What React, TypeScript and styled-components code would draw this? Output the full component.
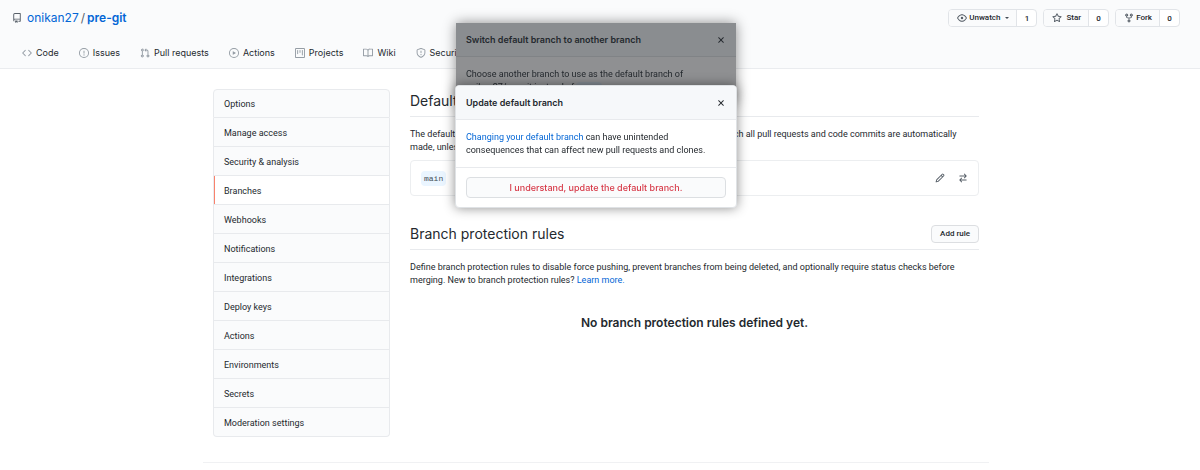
import React from "react";
import styled, { createGlobalStyle } from "styled-components";

const GlobalStyle = createGlobalStyle`
  *, *::before, *::after { box-sizing: border-box; }
  body {
    margin: 0;
    background: #fff;
    color: #24292e;
    font-family: Roboto, "Liberation Sans", sans-serif;
    font-size: 9px;
    line-height: 13px;
  }
  h1, h2, h3, p, ul { margin: 0; padding: 0; }
  h1, h2, h3 { font-family: Inter, "Liberation Sans", sans-serif; }
  ul { list-style: none; }
  button { font: inherit; color: inherit; cursor: pointer; }
  a { color: #0366d6; text-decoration: none; }
`;

const paths = {
  repo: "M2 2.5A2.5 2.5 0 014.5 0h8.75a.75.75 0 01.75.75v12.5a.75.75 0 01-.75.75h-2.5a.75.75 0 110-1.5h1.75v-2h-8a1 1 0 00-.714 1.7.75.75 0 01-1.072 1.05A2.495 2.495 0 012 11.5v-9zm10.5-1V9h-8c-.356 0-.694.074-1 .208V2.5a1 1 0 011-1h8zM5 12.25v3.25a.25.25 0 00.4.2l1.45-1.087a.25.25 0 01.3 0L8.6 15.7a.25.25 0 00.4-.2v-3.25a.25.25 0 00-.25-.25h-3.5a.25.25 0 00-.25.25z",
  code: "M4.72 3.22a.75.75 0 011.06 1.06L2.06 8l3.72 3.72a.75.75 0 11-1.06 1.06L.47 8.53a.75.75 0 010-1.06l4.25-4.25zm6.56 0a.75.75 0 10-1.06 1.06L13.94 8l-3.72 3.72a.75.75 0 101.06 1.06l4.25-4.25a.75.75 0 000-1.06l-4.25-4.25z",
  issue: "M8 1.5a6.5 6.5 0 100 13 6.5 6.5 0 000-13zM0 8a8 8 0 1116 0A8 8 0 010 8zm9 3a1 1 0 11-2 0 1 1 0 012 0zm-.25-6.25a.75.75 0 00-1.5 0v3.5a.75.75 0 001.5 0v-3.5z",
  pull: "M7.177 3.073L9.573.677A.25.25 0 0110 .854v4.792a.25.25 0 01-.427.177L7.177 3.427a.25.25 0 010-.354zM3.75 2.5a.75.75 0 100 1.5.75.75 0 000-1.5zm-2.25.75a2.25 2.25 0 113 2.122v5.256a2.251 2.251 0 11-1.5 0V5.372A2.25 2.25 0 011.5 3.25zM11 2.5h-1V4h1a1 1 0 011 1v5.628a2.251 2.251 0 101.5 0V5A2.5 2.5 0 0011 2.5zm1 10.25a.75.75 0 111.5 0 .75.75 0 01-1.5 0zM3.75 12a.75.75 0 100 1.5.75.75 0 000-1.5z",
  play: "M1.5 8a6.5 6.5 0 1113 0 6.5 6.5 0 01-13 0zM8 0a8 8 0 100 16A8 8 0 008 0zM6.379 5.227A.25.25 0 006 5.442v5.117a.25.25 0 00.379.214l4.264-2.559a.25.25 0 000-.428L6.379 5.227z",
  project: "M1.75 0A1.75 1.75 0 000 1.75v12.5C0 15.216.784 16 1.75 16h12.5A1.75 1.75 0 0016 14.25V1.75A1.75 1.75 0 0014.25 0H1.75zM1.5 1.75a.25.25 0 01.25-.25h12.5a.25.25 0 01.25.25v12.5a.25.25 0 01-.25.25H1.75a.25.25 0 01-.25-.25V1.75zM11.75 3a.75.75 0 00-.75.75v7.5a.75.75 0 001.5 0v-7.5a.75.75 0 00-.75-.75zm-8.25.75a.75.75 0 011.5 0v5.5a.75.75 0 01-1.5 0v-5.5zM8 3a.75.75 0 00-.75.75v3.5a.75.75 0 001.5 0v-3.5A.75.75 0 008 3z",
  book: "M0 1.75A.75.75 0 01.75 1h4.253c1.227 0 2.317.59 3 1.501A3.744 3.744 0 0111.006 1h4.245a.75.75 0 01.75.75v10.5a.75.75 0 01-.75.75h-4.507a2.25 2.25 0 00-1.591.659l-.622.621a.75.75 0 01-1.06 0l-.622-.621A2.25 2.25 0 005.258 13H.75a.75.75 0 01-.75-.75V1.75zm8.755 3a2.25 2.25 0 012.25-2.25H14.5v9h-3.757c-.71 0-1.4.201-1.992.572l.004-7.322zm-1.504 7.324l.004-5.073-.002-2.253A2.25 2.25 0 005.003 2.5H1.5v9h3.757a3.75 3.75 0 011.994.574z",
  shield: "M7.467.133a1.75 1.75 0 011.066 0l5.25 1.68A1.75 1.75 0 0115 3.48V7c0 1.566-.32 3.182-1.303 4.682-.983 1.498-2.585 2.813-5.032 3.855a1.7 1.7 0 01-1.33 0c-2.447-1.042-4.049-2.357-5.032-3.855C1.32 10.182 1 8.566 1 7V3.48a1.75 1.75 0 011.217-1.667l5.25-1.68zm.61 1.429a.25.25 0 00-.153 0l-5.25 1.68a.25.25 0 00-.174.238V7c0 1.358.275 2.666 1.057 3.86.784 1.194 2.121 2.34 4.366 3.297a.2.2 0 00.154 0c2.245-.956 3.582-2.104 4.366-3.298C13.225 9.666 13.5 8.36 13.5 7V3.48a.25.25 0 00-.174-.237l-5.25-1.68zM9 10.5a1 1 0 11-2 0 1 1 0 012 0zm-.25-5.75a.75.75 0 10-1.5 0v3a.75.75 0 001.5 0v-3z",
  eye: "M1.679 7.932c.412-.621 1.242-1.75 2.366-2.717C5.175 4.242 6.527 3.5 8 3.5c1.473 0 2.824.742 3.955 1.715 1.124.967 1.954 2.096 2.366 2.717a.119.119 0 010 .136c-.412.621-1.242 1.75-2.366 2.717C10.825 11.758 9.473 12.5 8 12.5c-1.473 0-2.824-.742-3.955-1.715C2.92 9.818 2.09 8.69 1.679 8.068a.119.119 0 010-.136zM8 2c-1.981 0-3.67.992-4.933 2.078C1.797 5.169.88 6.423.43 7.1a1.619 1.619 0 000 1.798c.45.678 1.367 1.932 2.637 3.024C4.329 13.008 6.019 14 8 14c1.981 0 3.67-.992 4.933-2.078 1.27-1.091 2.187-2.345 2.637-3.023a1.619 1.619 0 000-1.798c-.45-.678-1.367-1.932-2.637-3.023C11.671 2.992 9.981 2 8 2zm0 8a2 2 0 100-4 2 2 0 000 4z",
  star: "M8 .25a.75.75 0 01.673.418l1.882 3.815 4.21.612a.75.75 0 01.416 1.279l-3.046 2.97.719 4.192a.75.75 0 01-1.088.791L8 12.347l-3.766 1.98a.75.75 0 01-1.088-.79l.72-4.194L.818 6.374a.75.75 0 01.416-1.28l4.21-.611L7.327.668A.75.75 0 018 .25zm0 2.445L6.615 5.5a.75.75 0 01-.564.41l-3.097.45 2.24 2.184a.75.75 0 01.216.664l-.528 3.084 2.769-1.456a.75.75 0 01.698 0l2.77 1.456-.53-3.084a.75.75 0 01.216-.664l2.24-2.183-3.096-.45a.75.75 0 01-.564-.41L8 2.694v.001z",
  fork: "M5 3.25a.75.75 0 11-1.5 0 .75.75 0 011.5 0zm0 2.122a2.25 2.25 0 10-1.5 0v.878A2.25 2.25 0 005.75 8.5h1.5v2.128a2.251 2.251 0 101.5 0V8.5h1.5a2.25 2.25 0 002.25-2.25v-.878a2.25 2.25 0 10-1.5 0v.878a.75.75 0 01-.75.75h-4.5A.75.75 0 015 6.25v-.878zm3.75 7.378a.75.75 0 11-1.5 0 .75.75 0 011.5 0zm3-8.75a.75.75 0 100-1.5.75.75 0 000 1.5z",
  pencil: "M11.013 1.427a1.75 1.75 0 012.474 0l1.086 1.086a1.75 1.75 0 010 2.474l-8.61 8.61c-.21.21-.47.364-.756.445l-3.251.93a.75.75 0 01-.927-.928l.929-3.25a1.75 1.75 0 01.445-.758l8.61-8.61zm1.414 1.06a.25.25 0 00-.354 0L10.811 3.75l1.439 1.44 1.263-1.263a.25.25 0 000-.354l-1.086-1.086zM11.189 6.25L9.75 4.81l-6.286 6.287a.25.25 0 00-.064.108l-.558 1.953 1.953-.558a.249.249 0 00.108-.064l6.286-6.286z",
  swap: "M5.22 14.78a.75.75 0 001.06-1.06L4.56 12h8.69a.75.75 0 000-1.5H4.56l1.72-1.72a.75.75 0 00-1.06-1.06l-3 3a.75.75 0 000 1.06l3 3zm5.56-6.5a.75.75 0 11-1.06-1.06l1.72-1.72H2.75a.75.75 0 010-1.5h8.69L9.72 2.28a.75.75 0 011.06-1.06l3 3a.75.75 0 010 1.06l-3 3z",
  close: "M3.72 3.72a.75.75 0 011.06 0L8 6.94l3.22-3.22a.75.75 0 111.06 1.06L9.06 8l3.22 3.22a.75.75 0 11-1.06 1.06L8 9.06l-3.22 3.22a.75.75 0 01-1.06-1.06L6.94 8 3.72 4.78a.75.75 0 010-1.06z",
};

type IconName = keyof typeof paths;

const Svg = styled.svg<{ $tone: string }>`
  flex: none;
  display: block;
  fill: ${(p) => p.$tone};
`;

function Icon({ name, size = 10, tone = "#586069" }: { name: IconName; size?: number; tone?: string }) {
  return (
    <Svg $tone={tone} width={size} height={size} viewBox="0 0 16 16" aria-hidden="true">
      <path fillRule="evenodd" d={paths[name]} />
    </Svg>
  );
}

const gutter = "8px";

const Header = styled.header`
  display: flex;
  flex-direction: column;
  justify-content: space-between;
  height: 69px;
  padding: 9px calc(12px + ${gutter}) 0 12px;
  background: #fafbfc;
  border-bottom: 1px solid #eaecef;
`;

const TitleRow = styled.div`
  display: flex;
  justify-content: space-between;
  align-items: center;
  height: 18px;
`;

const RepoTitle = styled.h1`
  display: flex;
  align-items: center;
  gap: 2px;
  font-size: 12px;
  line-height: 18px;
  font-weight: 400;
  svg { margin-right: 3px; }
`;

const Slash = styled.span`
  color: #586069;
`;

const RepoLink = styled.a`
  font-weight: 600;
`;

const Actions = styled.ul`
  display: flex;
  gap: 6px;
`;

const ActionGroup = styled.li`
  display: flex;
  height: 18px;
  border: 1px solid #e1e4e8;
  border-radius: 4px;
  background: #fff;
  overflow: hidden;
  font-size: 8px;
  line-height: 16px;
  font-weight: 500;
`;

const ActionButton = styled.button<{ $gap: number }>`
  display: flex;
  align-items: center;
  gap: ${(p) => p.$gap}px;
  padding: 0 7px 0 8px;
  border: 0;
  border-right: 1px solid #e1e4e8;
  background: #fafbfc;
`;

const ActionCount = styled.a`
  min-width: 19px;
  padding-top: 1px;
  color: #24292e;
  text-align: center;
`;

const Caret = styled.span`
  margin-left: 3px;
  border: 2px solid transparent;
  border-top-color: #444d56;
  border-bottom: 0;
`;

const Tabs = styled.nav`
  display: flex;
  gap: 20px;
  height: 31px;
  padding-left: 10px;
  font-family: Inter, "Liberation Sans", sans-serif;
`;

const Tab = styled.a`
  display: flex;
  align-items: center;
  gap: 4px;
  color: #24292e;
`;

const Page = styled.div`
  padding-right: ${gutter};
`;

const Container = styled.div`
  max-width: 786px;
  margin: 0 auto;
`;

const Columns = styled.main`
  display: flex;
  gap: 20px;
  padding: 20px 10px 25px;
  border-bottom: 1px solid #f0f1f3;
`;

const Menu = styled.nav`
  flex: 0 0 177px;
  display: flex;
  flex-direction: column;
`;

const MenuItem = styled.a<{ $active?: boolean }>`
  display: block;
  height: 29px;
  padding: 9px 10px 6px;
  border: 1px solid #e8eaed;
  border-top: 0;
  background: ${(p) => (p.$active ? "#fff" : "#fafbfc")};
  box-shadow: ${(p) => (p.$active ? "inset 1px 0 #f9826c" : "none")};
  color: #24292e;
  &:first-child {
    padding-top: 8px;
    border-top: 1px solid #e8eaed;
    border-radius: 4px 4px 0 0;
  }
  &:last-child { border-radius: 0 0 4px 4px; }
`;

const Content = styled.div`
  flex: 1;
  min-width: 0;
`;

const SectionHead = styled.div`
  display: flex;
  justify-content: space-between;
  align-items: center;
  height: 28px;
  padding-bottom: 4px;
  border-bottom: 1px solid #e8eaed;
`;

const SectionTitle = styled.h2`
  font-size: 14px;
  line-height: 22px;
  font-weight: 400;
`;

const Section = styled.section`
  & + & { margin-top: 26px; }
`;

const Paragraph = styled.p`
  padding-top: 11px;
`;

const BranchBox = styled.div`
  display: flex;
  align-items: center;
  gap: 13px;
  height: 36px;
  margin-top: 6px;
  padding: 0 10px;
  border: 1px solid #eceef0;
  border-radius: 4px;
`;

const BranchName = styled.code`
  padding: 1px 3px;
  border-radius: 4px;
  background: #eaf5ff;
  color: #444d56;
  font-family: "Liberation Mono", monospace;
  font-size: 8px;
`;

const Spacer = styled.span`
  flex: 1;
`;

const IconButton = styled.button`
  display: flex;
  padding: 0;
  border: 0;
  background: none;
`;

const SmallButton = styled.button`
  height: 18px;
  padding: 0 8px;
  border: 1px solid #dcdee1;
  border-radius: 4px;
  background: #fafbfc;
  font-size: 8px;
  line-height: 16px;
  font-weight: 500;
`;

const Blank = styled.h3`
  padding: 27px 0;
  font-size: 12px;
  line-height: 18px;
  font-weight: 600;
  text-align: center;
`;

const Layer = styled.div<{ $top: number }>`
  position: fixed;
  inset: 0 ${gutter} auto 0;
  display: flex;
  justify-content: center;
  padding-top: ${(p) => p.$top}px;
`;

const Dialog = styled.section<{ $dimmed?: boolean }>`
  width: ${(p) => (p.$dimmed ? 280 : 282)}px;
  border: ${(p) => (p.$dimmed ? "0" : "1px solid #dfe2e5")};
  border-radius: ${(p) => (p.$dimmed ? 0 : 4)}px;
  background: ${(p) => (p.$dimmed ? "#8f9092" : "#fff")};
  box-shadow: 0 0 12px rgba(0, 0, 0, 0.45);
  overflow: hidden;
  --head: ${(p) => (p.$dimmed ? "#8a8d90" : "#f6f8fa")};
  --line: ${(p) => (p.$dimmed ? "#808386" : "#e8eaed")};
`;

const DialogHead = styled.header`
  display: flex;
  justify-content: space-between;
  align-items: center;
  height: 34px;
  padding: 0 10px;
  border-bottom: 1px solid var(--line);
  background: var(--head);
`;

const DialogTitle = styled.h3`
  font-size: 9px;
  line-height: 13px;
  font-weight: 600;
`;

const DialogBody = styled.p`
  padding: 11px 10px 10px;
`;

const DialogFoot = styled.div`
  padding: 9px 10px;
  border-top: 1px solid var(--line);
`;

const DangerButton = styled.button`
  display: block;
  width: 100%;
  height: 21px;
  border: 1px solid #dcdfe2;
  border-radius: 4px;
  background: #fafbfc;
  color: #d73a49;
  font-family: Inter, "Liberation Sans", sans-serif;
  font-weight: 500;
`;

const DimmedCode = styled(BranchName)`
  background: #858d94;
`;

const tabs: { icon: IconName; label: string }[] = [
  { icon: "code", label: "Code" },
  { icon: "issue", label: "Issues" },
  { icon: "pull", label: "Pull requests" },
  { icon: "play", label: "Actions" },
  { icon: "project", label: "Projects" },
  { icon: "book", label: "Wiki" },
  { icon: "shield", label: "Security" },
];

const menu = [
  "Options",
  "Manage access",
  "Security & analysis",
  "Branches",
  "Webhooks",
  "Notifications",
  "Integrations",
  "Deploy keys",
  "Actions",
  "Environments",
  "Secrets",
  "Moderation settings",
];

export default function App() {
  return (
    <>
      <GlobalStyle />
      <Header>
        <TitleRow>
          <RepoTitle>
            <Icon name="repo" />
            <a href="#owner">onikan27</a>
            <Slash>/</Slash>
            <RepoLink href="#repo">pre-git</RepoLink>
          </RepoTitle>
          <Actions>
            <ActionGroup>
              <ActionButton $gap={2}>
                <Icon name="eye" />
                Unwatch
                <Caret />
              </ActionButton>
              <ActionCount href="#watchers">1</ActionCount>
            </ActionGroup>
            <ActionGroup>
              <ActionButton $gap={4}>
                <Icon name="star" />
                Star
              </ActionButton>
              <ActionCount href="#stargazers">0</ActionCount>
            </ActionGroup>
            <ActionGroup>
              <ActionButton $gap={2}>
                <Icon name="fork" />
                Fork
              </ActionButton>
              <ActionCount href="#forks">0</ActionCount>
            </ActionGroup>
          </Actions>
        </TitleRow>
        <Tabs aria-label="Repository">
          {tabs.map((t) => (
            <Tab key={t.label} href={`#${t.icon}`}>
              <Icon name={t.icon} tone="#959da5" />
              {t.label}
            </Tab>
          ))}
        </Tabs>
      </Header>

      <Page>
        <Container>
          <Columns>
            <Menu aria-label="Settings">
              {menu.map((label) => (
                <MenuItem key={label} href="#settings" $active={label === "Branches"}>
                  {label}
                </MenuItem>
              ))}
            </Menu>
            <Content>
              <Section>
                <SectionHead>
                  <SectionTitle>Default branch</SectionTitle>
                </SectionHead>
                <Paragraph>
                  The default branch is considered the “base” branch in your repository, against which all pull
                  requests and code commits are automatically made, unless you specify a different branch.
                </Paragraph>
                <BranchBox>
                  <BranchName>main</BranchName>
                  <Spacer />
                  <IconButton aria-label="Rename branch">
                    <Icon name="pencil" />
                  </IconButton>
                  <IconButton aria-label="Switch to another branch">
                    <Icon name="swap" />
                  </IconButton>
                </BranchBox>
              </Section>
              <Section>
                <SectionHead>
                  <SectionTitle>Branch protection rules</SectionTitle>
                  <SmallButton>Add rule</SmallButton>
                </SectionHead>
                <Paragraph>
                  Define branch protection rules to disable force pushing, prevent branches from being deleted, and
                  optionally require status checks before merging. New to branch protection rules?{" "}
                  <a href="#learn">Learn more.</a>
                </Paragraph>
                <Blank>No branch protection rules defined yet.</Blank>
              </Section>
            </Content>
          </Columns>
        </Container>
      </Page>

      <Layer $top={23}>
        <Dialog $dimmed aria-label="Switch default branch to another branch">
          <DialogHead>
            <DialogTitle>Switch default branch to another branch</DialogTitle>
            <IconButton aria-label="Close">
              <Icon name="close" tone="#24292e" />
            </IconButton>
          </DialogHead>
          <DialogBody>
            Choose another branch to use as the default branch of onikan27/pre-git instead of{" "}
            <DimmedCode>main</DimmedCode>.
          </DialogBody>
        </Dialog>
      </Layer>
      <Layer $top={85}>
        <Dialog role="dialog" aria-label="Update default branch">
          <DialogHead>
            <DialogTitle>Update default branch</DialogTitle>
            <IconButton aria-label="Close">
              <Icon name="close" tone="#24292e" />
            </IconButton>
          </DialogHead>
          <DialogBody>
            <a href="#changing">Changing your default branch</a> can have unintended consequences that can affect new
            pull requests and clones.
          </DialogBody>
          <DialogFoot>
            <DangerButton>I understand, update the default branch.</DangerButton>
          </DialogFoot>
        </Dialog>
      </Layer>
    </>
  );
}
